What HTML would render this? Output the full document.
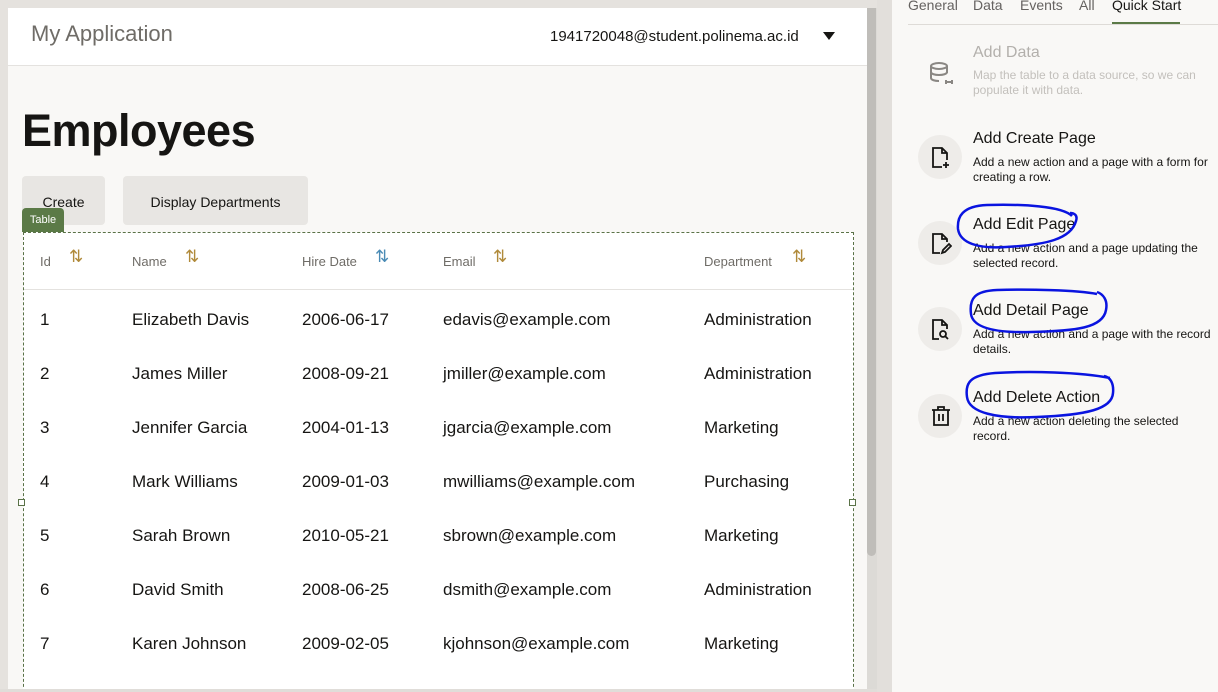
<!DOCTYPE html>
<html><head><meta charset="utf-8"><style>
*{margin:0;padding:0;box-sizing:border-box}
body{width:1218px;height:692px;overflow:hidden;background:#e5e2de;font-family:"Liberation Sans",sans-serif;position:relative;color:#161513}
.abs{position:absolute}
.card{left:8px;top:8px;width:859px;height:681px;background:#f9f8f6;overflow:hidden}
.hdr{left:0;top:0;width:859px;height:58px;background:#fff;border-bottom:1px solid #e4e2df}
.btn{background:#e8e6e3;border-radius:4px;font-size:14px;text-align:center;line-height:52px;height:49px;top:168px}
.tbl{left:15px;top:224px;width:831px;height:470px;background:#fff;border:1px dashed #5a7247}
.th{font-size:13px;color:#6f6c67;top:21px}
.si{font-size:17px;color:#b08a3a;top:14px}
.td{font-size:17px;color:#161513}
.rp{left:892px;top:0;width:326px;height:692px;background:#f9f8f6}
.tab{top:-3px;font-size:14px;color:#656260}
.ic{left:26px;width:44px;height:44px;border-radius:50%;background:#eeece9}
.t{left:81px;font-size:16px}
.d{left:81px;font-size:12px;line-height:15px;width:240px}
</style></head><body>
<div class="abs card">
 <div class="abs hdr">
  <div class="abs" style="left:23px;top:13px;font-size:22px;color:#6f6c67">My Application</div>
  <div class="abs" style="left:542px;top:20px;font-size:15px">1941720048@student.polinema.ac.id</div>
  <div class="abs" style="left:815px;top:24px;width:0;height:0;border-left:6px solid transparent;border-right:6px solid transparent;border-top:8px solid #161513"></div>
 </div>
 <div class="abs" style="left:14px;top:97px;font-size:45px;font-weight:bold;letter-spacing:-0.5px">Employees</div>
 <div class="abs btn" style="left:14px;width:83px">Create</div>
 <div class="abs btn" style="left:115px;width:185px">Display Departments</div>
 <div class="abs tbl">
  <div class="abs th" style="left:16px">Id</div><div class="abs si" style="left:45px">⇅</div>
  <div class="abs th" style="left:108px">Name</div><div class="abs si" style="left:161px">⇅</div>
  <div class="abs th" style="left:278px">Hire Date</div><div class="abs si" style="left:351px;color:#4a8bb5">⇅</div>
  <div class="abs th" style="left:419px">Email</div><div class="abs si" style="left:469px">⇅</div>
  <div class="abs th" style="left:680px">Department</div><div class="abs si" style="left:768px">⇅</div>
  <div class="abs" style="left:0;top:56px;width:829px;height:1px;background:#e4e2df"></div>
 </div>
 <div class="abs" style="left:14px;top:200px;width:42px;height:24px;background:#5b7a47;color:#fff;font-size:11px;line-height:24px;text-align:center;border-radius:4px 4px 0 0">Table</div>
 <div class="abs" style="left:10px;top:491px;width:7px;height:7px;border:1px solid #5a7247;background:#fff"></div>
 <div class="abs" style="left:841px;top:491px;width:7px;height:7px;border:1px solid #5a7247;background:#fff"></div>
</div>
<div class="abs" style="left:867px;top:8px;width:10px;height:681px;background:#dcdad6"></div>
<div class="abs" style="left:867px;top:8px;width:9px;height:548px;background:#bfbdb9;border-radius:0 0 5px 5px"></div>
<div class="abs" style="left:877px;top:0;width:15px;height:692px;background:#e2dfdb"></div>
<div class="abs" style="left:0;top:689px;width:877px;height:3px;background:#e0ddd9"></div>

<div id="rows"></div>
<script>
var r=[["1","Elizabeth Davis","2006-06-17","edavis@example.com","Administration"],["2","James Miller","2008-09-21","jmiller@example.com","Administration"],["3","Jennifer Garcia","2004-01-13","jgarcia@example.com","Marketing"],["4","Mark Williams","2009-01-03","mwilliams@example.com","Purchasing"],["5","Sarah Brown","2010-05-21","sbrown@example.com","Marketing"],["6","David Smith","2008-06-25","dsmith@example.com","Administration"],["7","Karen Johnson","2009-02-05","kjohnson@example.com","Marketing"]];
var x=[40,132,302,443,704],h="";
r.forEach(function(a,i){a.forEach(function(s,j){h+='<div class="abs td" style="left:'+x[j]+'px;top:'+(310+i*54)+'px">'+s+'</div>'})});
document.getElementById("rows").innerHTML=h;
</script>

<div class="abs rp">
 <div class="abs tab" style="left:16px">General</div>
 <div class="abs tab" style="left:81px">Data</div>
 <div class="abs tab" style="left:128px">Events</div>
 <div class="abs tab" style="left:187px">All</div>
 <div class="abs tab" style="left:220px;color:#161513">Quick Start</div>
 <div class="abs" style="left:16px;top:24px;width:310px;height:1px;background:#dedbd7"></div>
 <div class="abs" style="left:220px;top:22px;width:68px;height:2px;background:#5b7a47"></div>

 <svg class="abs" style="left:37px;top:61px" width="26" height="26" viewBox="0 0 26 26" fill="none" stroke="#8a8783" stroke-width="2"><ellipse cx="10" cy="5" rx="8" ry="3"/><path d="M2 5v12c0 2 4 3 8 3M18 5v7M2 11c0 2 4 3 8 3s8-1 8-3"/><path d="M17 19v4M23 19v4M17 21h6"/></svg>
 <div class="abs t" style="top:44px;color:#b3b0ac">Add Data</div>
 <div class="abs d" style="top:68px;color:#c3c0bc">Map the table to a data source, so we can populate it with data.</div>

 <div class="abs ic" style="top:135px"></div>
 <svg class="abs" style="left:38px;top:146px" width="22" height="24" viewBox="0 0 22 24" fill="none" stroke="#161513" stroke-width="1.8"><path d="M12 21H3V2h9l5 5v7M12 2v5h5"/><path d="M16 16v6M13 19h6"/></svg>
 <div class="abs t" style="top:130px">Add Create Page</div>
 <div class="abs d" style="top:155px">Add a new action and a page with a form for creating a row.</div>

 <div class="abs ic" style="top:221px"></div>
 <svg class="abs" style="left:38px;top:232px" width="22" height="24" viewBox="0 0 22 24" fill="none" stroke="#161513" stroke-width="1.8"><path d="M10 21H3V2h9l5 5v3M12 2v5h5"/><path d="M12 21l1-3 6-6 2 2-6 6z"/></svg>
 <div class="abs t" style="top:216px">Add Edit Page</div>
 <div class="abs d" style="top:241px">Add a new action and a page updating the selected record.</div>

 <div class="abs ic" style="top:307px"></div>
 <svg class="abs" style="left:38px;top:318px" width="22" height="24" viewBox="0 0 22 24" fill="none" stroke="#161513" stroke-width="1.8"><path d="M9 21H3V2h9l5 5v4M12 2v5h5"/><circle cx="13" cy="16" r="3"/><path d="M15 18l3 3"/></svg>
 <div class="abs t" style="top:302px">Add Detail Page</div>
 <div class="abs d" style="top:327px">Add a new action and a page with the record details.</div>

 <div class="abs ic" style="top:394px"></div>
 <svg class="abs" style="left:39px;top:405px" width="22" height="22" viewBox="0 0 22 22" fill="none" stroke="#161513" stroke-width="1.8"><path d="M1 5h18M7 5V2h6v3M3 5v15h14V5M8 9v7M12 9v7"/></svg>
 <div class="abs t" style="top:389px">Add Delete Action</div>
 <div class="abs d" style="top:414px;width:230px">Add a new action deleting the selected record.</div>
</div>

<svg class="abs" style="left:0;top:0" width="1218" height="692" fill="none" stroke="#0a14e0" stroke-width="2.5">
 <path d="M1072 216c-10-10-50-12-85-11-25 1-30 12-29 24 2 14 20 20 48 18 40-2 65-8 70-26 2-6-2-8-6-8"/>
 <path d="M1097 294c-20-4-70-5-100-4-22 1-28 8-26 24 2 14 25 19 60 18 45-1 72-4 75-22 2-10-3-16-9-18"/>
 <path d="M1110 378c-30-6-80-7-115-5-25 2-30 10-28 24 2 16 30 22 70 20 50-2 75-8 76-24 1-10-3-16-9-17"/>
</svg>
</body></html>
